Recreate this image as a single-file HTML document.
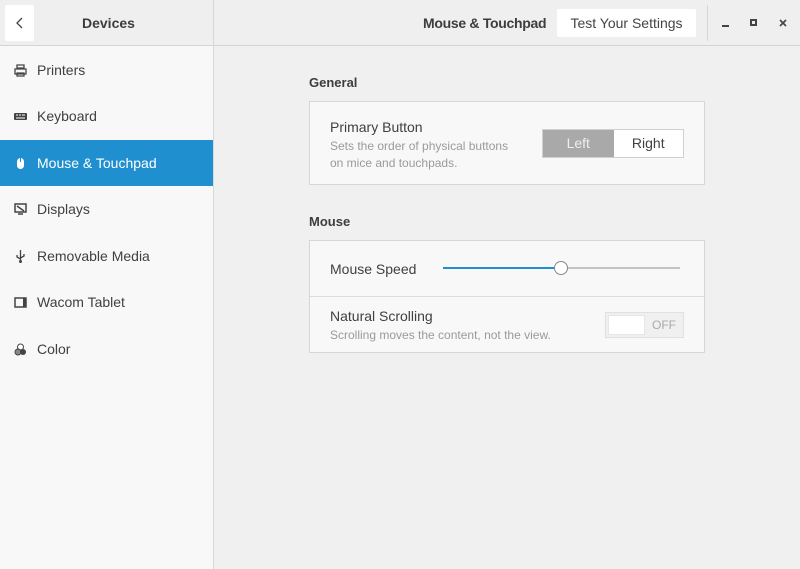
<!DOCTYPE html>
<html><head><style>
*{box-sizing:border-box;margin:0;padding:0}
body{width:800px;height:569px;overflow:hidden;background:#f0f0f0;font-family:"Liberation Sans",sans-serif;font-size:14px;color:#404040;position:relative}
.hdr{position:absolute;left:0;top:0;width:800px;height:46px;background:#efefef;border-bottom:1px solid #d4d4d4}
.abs{position:absolute}
.side{position:absolute;left:0;top:46px;width:214px;height:523px;background:#f8f8f8;border-right:1px solid #d8d8d8}
.row{position:absolute;left:0;width:213px;height:46px;display:flex;align-items:center;padding-left:14px}
.row span{margin-left:10px;font-size:14px}
.ic{width:13px;height:13px;display:inline-block}
.frame{position:absolute;left:309px;width:396px;background:#f8f8f8;border:1px solid #d6d6d6}
.sub{font-size:12px;color:#9a9a9a;line-height:17px}
</style></head><body>
<div class="hdr">
 <div class="abs" style="left:5px;top:5px;width:29px;height:36px;background:#fff;border-radius:2px"><svg width="29" height="36" viewBox="0 0 29 36"><path d="M17 13l-5 5 5 5" fill="none" stroke="#444" stroke-width="1.3"/></svg></div>
 <div class="abs" style="left:82px;top:15px;font-weight:bold;font-size:14px;color:#3d3d3d">Devices</div>
 <div class="abs" style="left:213px;top:0;width:1px;height:46px;background:#d6d6d6"></div>
 <div class="abs" style="left:423px;top:15px;font-weight:bold;font-size:14px;color:#3d3d3d;letter-spacing:-0.3px">Mouse &amp; Touchpad</div>
 <div class="abs" style="left:557px;top:9px;width:139px;height:28px;background:#fff;border-radius:2px;text-align:center;line-height:28px;font-size:14px;color:#444">Test Your Settings</div>
 <div class="abs" style="left:707px;top:5px;width:1px;height:36px;background:#d6d6d6"></div>
 <div class="abs" style="left:722px;top:25px;width:7px;height:2px;background:#444"></div>
 <div class="abs" style="left:750px;top:19px;width:7px;height:7px;border:2px solid #444"></div>
 <svg class="abs" style="left:779px;top:19px" width="8" height="8" viewBox="0 0 8 8"><path d="M1 1l6 6M7 1l-6 6" stroke="#444" stroke-width="1.6"/></svg>
</div>
<div class="side">
 <div class="row" style="top:1px"><svg class="ic" viewBox="0 0 13 13"><path d="M3 1h7v3H3zM1 5h11v5H1zM3 9h7v3H3z" fill="none" stroke="#444" stroke-width="1.3"/></svg><span>Printers</span></div>
 <div class="row" style="top:47px"><svg class="ic" viewBox="0 0 13 13"><rect x="0" y="3" width="13" height="7" rx="1" fill="#444"/><path d="M2 5h2M5 5h2M8 5h3M2 8h9" stroke="#fff"/></svg><span>Keyboard</span></div>
 <div class="row" style="top:94px;background:#1f8fd0;color:#fff;height:46px"><svg class="ic" viewBox="0 0 13 13"><rect x="3" y="1" width="7" height="11" rx="3.5" fill="#fff"/><path d="M6.5 1v4" stroke="#1f8fd0"/></svg><span>Mouse &amp; Touchpad</span></div>
 <div class="row" style="top:140px"><svg class="ic" viewBox="0 0 13 13"><rect x="1" y="1" width="11" height="8" fill="none" stroke="#444" stroke-width="1.5"/><path d="M3 3l7 5M4 11h5" stroke="#444" stroke-width="1.5"/></svg><span>Displays</span></div>
 <div class="row" style="top:187px"><svg class="ic" viewBox="0 0 13 13"><path d="M6.5 0v12M3 5v2l3.5 2M10 4v2l-3.5 2" stroke="#444" stroke-width="1.3" fill="none"/><circle cx="6.5" cy="11.5" r="1.5" fill="#444"/></svg><span>Removable Media</span></div>
 <div class="row" style="top:233px"><svg class="ic" viewBox="0 0 13 13"><rect x="1" y="2" width="11" height="9" fill="none" stroke="#444" stroke-width="1.5"/><rect x="9" y="2" width="3" height="9" fill="#444"/></svg><span>Wacom Tablet</span></div>
 <div class="row" style="top:280px"><svg class="ic" viewBox="0 0 13 13"><circle cx="6.5" cy="4" r="3" fill="#fff" stroke="#444"/><circle cx="4" cy="9" r="3" fill="#888" stroke="#444"/><circle cx="9" cy="9" r="3" fill="#444"/></svg><span>Color</span></div>
</div>
<div class="abs" style="left:309px;top:75px;font-weight:bold;font-size:13px;color:#3d3d3d">General</div>
<div class="frame" style="top:101px;height:84px">
 <div class="abs" style="left:20px;top:17px;font-size:14px">Primary Button</div>
 <div class="abs sub" style="left:20px;top:36px">Sets the order of physical buttons<br>on mice and touchpads.</div>
 <div class="abs" style="left:232px;top:27px;width:142px;height:29px;border:1px solid #d0d0d0;display:flex;font-size:14px">
  <div style="width:71px;background:#a9a9a9;color:#eee;text-align:center;line-height:27px">Left</div>
  <div style="width:70px;background:#fff;text-align:center;line-height:27px">Right</div>
 </div>
</div>
<div class="abs" style="left:309px;top:214px;font-weight:bold;font-size:13px;color:#3d3d3d">Mouse</div>
<div class="frame" style="top:240px;height:113px">
 <div class="abs" style="left:20px;top:20px">Mouse Speed</div>
 <div class="abs" style="left:133px;top:26px;width:119px;height:2px;background:#1f8fd0"></div>
 <div class="abs" style="left:252px;top:26px;width:118px;height:2px;background:#c4c4c4"></div>
 <div class="abs" style="left:244px;top:20px;width:14px;height:14px;border-radius:50%;background:#fff;border:1px solid #888"></div>
 <div class="abs" style="left:0;top:55px;width:394px;height:1px;background:#dcdcdc"></div>
 <div class="abs" style="left:20px;top:67px">Natural Scrolling</div>
 <div class="abs sub" style="left:20px;top:86px">Scrolling moves the content, not the view.</div>
 <div class="abs" style="left:295px;top:71px;width:79px;height:26px;background:#f0f0f0;border:1px solid #e0e0e0">
  <div class="abs" style="left:2px;top:2px;width:37px;height:20px;background:#fff;border:1px solid #e6e6e6"></div>
  <div class="abs" style="left:46px;top:5px;font-size:12px;color:#aaa">OFF</div>
 </div>
</div>
</body></html>
